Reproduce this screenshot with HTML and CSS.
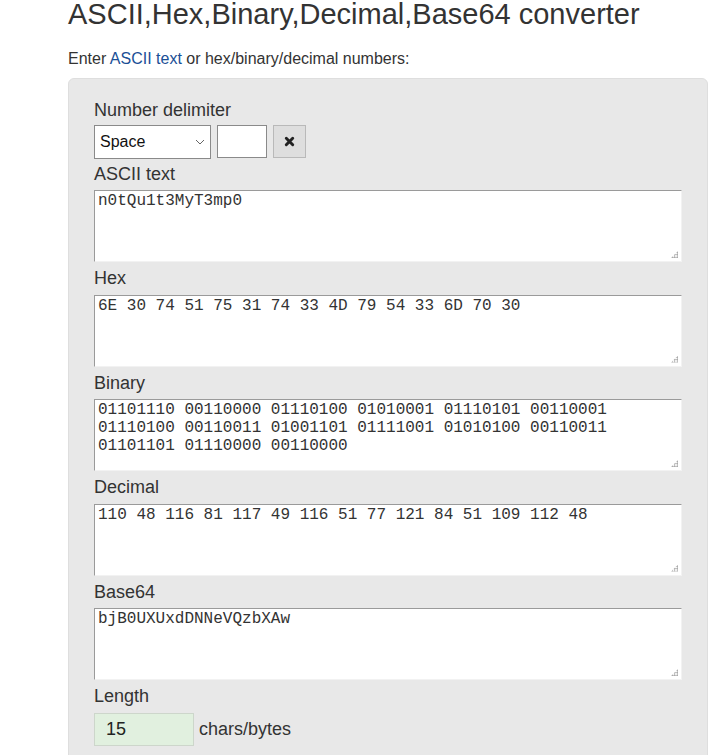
FILE: index.html
```html
<!DOCTYPE html>
<html>
<head>
<meta charset="utf-8">
<link rel="stylesheet" href="styles.css">
</head>
<body>
<div class="page">
  <h1 class="title">ASCII,Hex,Binary,Decimal,Base64 converter</h1>
  <p class="intro">Enter <a href="#" class="link">ASCII text</a> or hex/binary/decimal numbers:</p>
  <div class="panel">
    <div class="label first">Number delimiter</div>
    <div class="delim-row">
      <div class="select">
        <span>Space</span>
        <svg class="chev" width="10" height="6" viewBox="0 0 10 6"><path d="M1 1 L5 5 L9 1" fill="none" stroke="#666" stroke-width="1"/></svg>
      </div>
      <div class="small-input"></div>
      <button class="clear-btn"><svg width="11" height="11" viewBox="0 0 12 12"><path d="M2.5 2.5 L9.5 9.5 M9.5 2.5 L2.5 9.5" stroke="#222" stroke-width="3.2" stroke-linecap="round"/></svg></button>
    </div>
    <div class="label second">ASCII text</div>
    <div class="area">n0tQu1t3MyT3mp0<span class="grip"></span></div>
    <div class="label">Hex</div>
    <div class="area">6E 30 74 51 75 31 74 33 4D 79 54 33 6D 70 30<span class="grip"></span></div>
    <div class="label">Binary</div>
    <div class="area">01101110 00110000 01110100 01010001 01110101 00110001
01110100 00110011 01001101 01111001 01010100 00110011
01101101 01110000 00110000<span class="grip"></span></div>
    <div class="label">Decimal</div>
    <div class="area">110 48 116 81 117 49 116 51 77 121 84 51 109 112 48<span class="grip"></span></div>
    <div class="label">Base64</div>
    <div class="area">bjB0UXUxdDNNeVQzbXAw<span class="grip"></span></div>
    <div class="label">Length</div>
    <div class="length-row">
      <div class="length-box">15</div>
      <span class="unit">chars/bytes</span>
    </div>
    <div class="label">Checksum</div>
  </div>
</div>
</body>
</html>
```

FILE: styles.css
```css
html, body {
  margin: 0;
  padding: 0;
  background: #ffffff;
}
body {
  font-family: "Liberation Sans", Arial, sans-serif;
  color: #333333;
  overflow: hidden;
}
.page {
  padding-left: 68px;
  width: 640px;
}
.title {
  font-size: 29px;
  font-weight: normal;
  line-height: 32px;
  margin: -2px 0 0 0;
  color: #333333;
  white-space: nowrap;
}
.intro {
  font-size: 16px;
  line-height: 20px;
  margin: 19px 0 0 0;
}
.link {
  color: #1a4f96;
  text-decoration: none;
}
.panel {
  margin-top: 9px;
  background: #e8e8e8;
  border: 1px solid #dedede;
  border-radius: 6px;
  padding: 21px 25px 40px 25px;
  height: 800px;
}
.label {
  font-size: 18px;
  line-height: 20px;
  padding: 6px 0 6.5px 0;
}
.label.first {
  padding: 0 0 5px 0;
}
.label.second {
  padding: 5px 0 6px 0;
}
.delim-row {
  display: flex;
  gap: 6px;
  align-items: flex-start;
  height: 34px;
}
.select {
  box-sizing: border-box;
  width: 117px;
  height: 34px;
  background: #ffffff;
  border: 1px solid #8a8a8a;
  display: flex;
  align-items: center;
  justify-content: space-between;
  padding: 0 5px 0 5px;
  font-size: 16px;
  color: #111;
}
.small-input {
  box-sizing: border-box;
  width: 50px;
  height: 33px;
  background: #ffffff;
  border: 1px solid #8a8a8a;
}
.clear-btn {
  box-sizing: border-box;
  width: 33px;
  height: 33px;
  background: #dedede;
  border: 1px solid #b9b9b9;
  padding: 0;
  display: flex;
  align-items: center;
  justify-content: center;
}
.area {
  position: relative;
  box-sizing: border-box;
  width: 588px;
  height: 72px;
  background: #ffffff;
  border-top: 1px solid #9a9a9a;
  border-left: 1px solid #9a9a9a;
  border-right: 1px solid #f2f2f2;
  border-bottom: 1px solid #f2f2f2;
  font-family: "Liberation Mono", "Courier New", monospace;
  font-size: 16px;
  line-height: 18px;
  color: #333;
  padding: 1px 3px;
  white-space: pre;
  overflow: hidden;
}
.grip {
  position: absolute;
  right: 3px;
  bottom: 3px;
  width: 7px;
  height: 7px;
  background:
    radial-gradient(circle, #9a9a9a 0.8px, transparent 1px) 0 0 / 2.5px 2.5px;
  clip-path: polygon(100% 0, 100% 100%, 0 100%);
}
.length-row {
  display: flex;
  align-items: center;
  gap: 5px;
}
.length-box {
  box-sizing: border-box;
  width: 100px;
  height: 33px;
  background: #e1f0df;
  border: 1px solid #cdd6cb;
  font-size: 18px;
  line-height: 31px;
  padding-left: 11px;
  color: #222;
}
.unit {
  font-size: 18px;
}
```
